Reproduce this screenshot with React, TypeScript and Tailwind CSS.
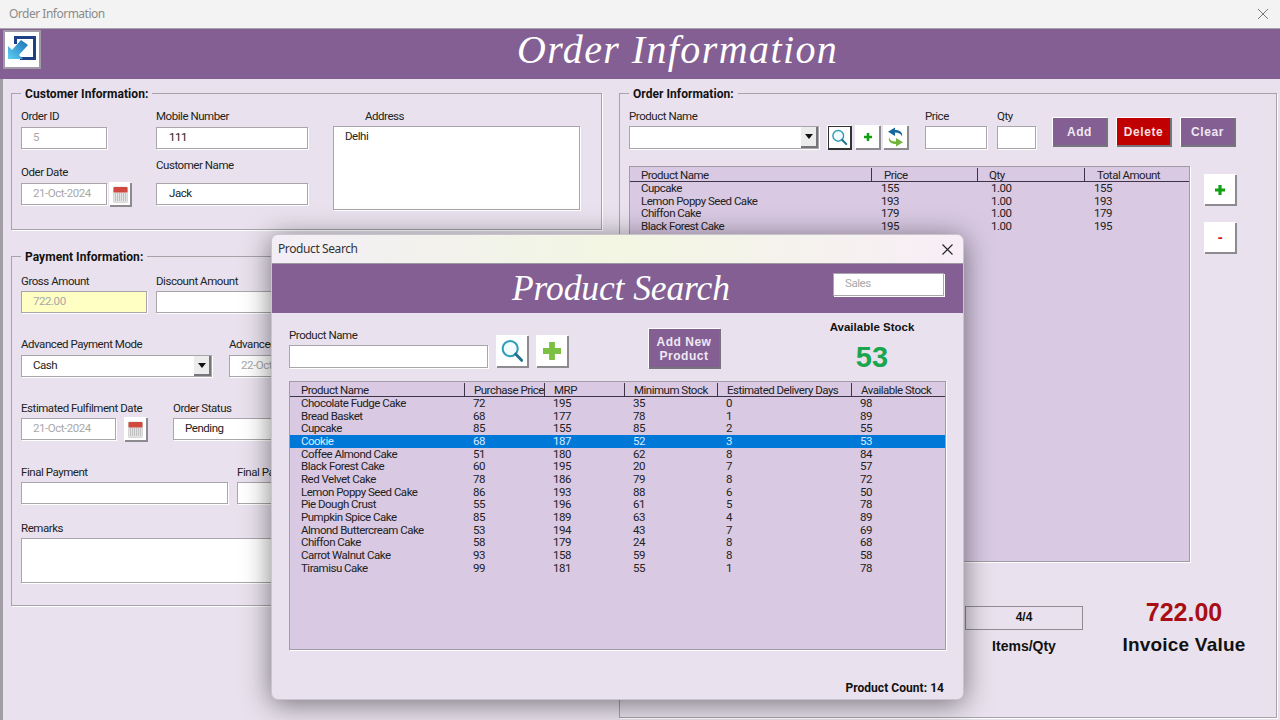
import React from "react";

const Label = ({ children, className = "" }: { children: React.ReactNode; className?: string }) => (
  <div className={`h-[14px] text-[11.5px] leading-[13px] text-[#222] whitespace-nowrap ${className}`}>{children}</div>
);

const Box = ({ children, className = "", muted = false }: { children?: React.ReactNode; className?: string; muted?: boolean }) => (
  <div className={`border border-[#a8a6aa] bg-white shadow-[1px_1px_0_#fff] text-[11.5px] leading-[19px] whitespace-nowrap overflow-hidden ${muted ? "text-[#a8a8a8]" : "text-[#222]"} ${className}`}>
    {children}
  </div>
);

const CalIcon = () => (
  <svg width="15" height="17" viewBox="0 0 15 17">
    <rect x="0.5" y="1" width="14" height="15.5" rx="1" fill="#e4e4e4" stroke="#bbb" strokeWidth="0.5" />
    <rect x="0.5" y="1" width="14" height="5.5" rx="1" fill="#d0483e" />
    {[8, 10, 12, 14].map((y) => (
      <line key={y} x1="2" x2="13" y1={y} y2={y} stroke="#9a9a9a" strokeWidth="1" strokeDasharray="1 1" />
    ))}
  </svg>
);

const Raised = ({ children, className = "" }: { children?: React.ReactNode; className?: string }) => (
  <div className={`flex items-center justify-center bg-white border-r-2 border-b-2 border-[#8d8a90] shadow-[-1px_-1px_0_#fff] shrink-0 ${className}`}>{children}</div>
);

const Cal = ({ className = "" }: { className?: string }) => (
  <Raised className={`bg-[#efefef] ${className}`}>
    <CalIcon />
  </Raised>
);

const Arrow = () => (
  <div className="w-[17px] h-full flex items-center justify-center bg-[#ececec] border-r-2 border-b-2 border-[#77747a]">
    <svg width="8" height="5" viewBox="0 0 8 5"><path d="M0 0h8L4 5z" fill="#111" /></svg>
  </div>
);

const Search = ({ size = 20 }: { size?: number }) => (
  <svg width={size} height={size} viewBox="0 0 20 20" fill="none">
    <circle cx="8.5" cy="8" r="6.3" stroke="#2f9db5" strokeWidth="1.7" fill="#f2fbfd" />
    <path d="M13 12.6l5 5.2" stroke="#25708f" strokeWidth="2.4" strokeLinecap="round" />
  </svg>
);

const Plus = ({ size, color }: { size: number; color: string }) => (
  <svg width={size} height={size} viewBox="0 0 10 10"><path d="M3.4 0h3.2v3.4H10v3.2H6.6V10H3.4V6.6H0V3.4h3.4z" fill={color} /></svg>
);

const Refresh = () => (
  <svg width="19" height="20" viewBox="0 0 19 20">
    <path d="M16 9.500C15 6.500 12.500 5.500 9 5.500L9 9L2 4.800L9 0.500L9 3C14 3 17 5.500 16 9.500Z" fill="#17699c" />
    <path d="M3 10.500C4 13.500 6.500 14.500 10 14.500L10 11L17 15.200L10 19.500L10 17C5 17 2 14.500 3 10.500Z" fill="#72b53a" />
  </svg>
);

const Legend = ({ children }: { children: React.ReactNode }) => (
  <legend className="ml-[9px] px-[4px] h-[14px] text-[12px] leading-[16px] font-bold text-[#111] tracking-[0.05px]">{children}</legend>
);

const fieldset = "border border-[#a6a3a9] shadow-[1px_1px_0_#fff] min-w-0";

type Col = { w: number; head: number; cell: number; title: string };

const Grid = ({ cols, rows, selected, className }: { cols: Col[]; rows: string[][]; selected?: number; className: string }) => (
  <div className={`border border-[#a09ca5] bg-[#d9c9e3] pt-[1px] text-[11.5px] tracking-[-0.5px] text-[#222] shadow-[1px_1px_0_#fff] overflow-hidden ${className}`}>
    <div className="flex h-[13px] border-b border-[#3d3547] leading-[14px] box-content">
      {cols.map((c, i) => (
        <div key={c.title} style={{ width: c.w, paddingLeft: c.head }} className={`whitespace-nowrap overflow-hidden ${i ? "border-l border-[#3d3547]" : ""}`}>
          {c.title}
        </div>
      ))}
    </div>
    {rows.map((r, ri) => (
      <div key={r[0]} className={`flex h-[12.67px] leading-[12px] ${ri === selected ? "bg-[#0078d7] text-[#d8ecff]" : ""}`}>
        {r.map((v, i) => (
          <div key={i} style={{ width: cols[i].w, paddingLeft: cols[i].cell }} className="whitespace-nowrap">{v}</div>
        ))}
      </div>
    ))}
  </div>
);

const orderCols: Col[] = [
  { w: 241, head: 11, cell: 11, title: "Product Name" },
  { w: 106, head: 12, cell: 10, title: "Price" },
  { w: 107, head: 11, cell: 14, title: "Qty" },
  { w: 105, head: 12, cell: 10, title: "Total Amount" },
];
const orderRows = [
  ["Cupcake", "155", "1.00", "155"],
  ["Lemon Poppy Seed Cake", "193", "1.00", "193"],
  ["Chiffon Cake", "179", "1.00", "179"],
  ["Black Forest Cake", "195", "1.00", "195"],
];

const productCols: Col[] = [
  { w: 174, head: 11, cell: 11, title: "Product Name" },
  { w: 80, head: 9, cell: 9, title: "Purchase Price" },
  { w: 80, head: 9, cell: 9, title: "MRP" },
  { w: 93, head: 9, cell: 9, title: "Minimum Stock" },
  { w: 134, head: 9, cell: 9, title: "Estimated Delivery Days" },
  { w: 94, head: 9, cell: 9, title: "Available Stock" },
];
const productRows = [
  ["Chocolate Fudge Cake", "72", "195", "35", "0", "98"],
  ["Bread Basket", "68", "177", "78", "1", "89"],
  ["Cupcake", "85", "155", "85", "2", "55"],
  ["Cookie", "68", "187", "52", "3", "53"],
  ["Coffee Almond Cake", "51", "180", "62", "8", "84"],
  ["Black Forest Cake", "60", "195", "20", "7", "57"],
  ["Red Velvet Cake", "78", "186", "79", "8", "72"],
  ["Lemon Poppy Seed Cake", "86", "193", "88", "6", "50"],
  ["Pie Dough Crust", "55", "196", "61", "5", "78"],
  ["Pumpkin Spice Cake", "85", "189", "63", "4", "89"],
  ["Almond Buttercream Cake", "53", "194", "43", "7", "69"],
  ["Chiffon Cake", "58", "179", "24", "8", "68"],
  ["Carrot Walnut Cake", "93", "158", "59", "8", "58"],
  ["Tiramisu Cake", "99", "181", "55", "1", "78"],
];

const ActionBtn = ({ label, red = false }: { label: string; red?: boolean }) => (
  <div className={`w-[55px] h-[29px] pt-[1px] flex items-center justify-center text-[12px] font-bold [font-family:'Liberation_Sans',sans-serif] tracking-[0.6px] border-r-2 border-b-2 border-[#77737c] shadow-[-1px_-1px_0_#fff] ${red ? "bg-[#c00000] text-[#f6dede]" : "bg-[#835f93] text-[#efe8f3]"}`}>
    {label}
  </div>
);

export default function App() {
  return (
    <div className="relative w-[1280px] h-[720px] overflow-hidden bg-[#e9e2ee] [font-family:Roboto,sans-serif] tracking-[-0.45px]">
      {/* window title bar */}
      <div className="h-[29px] flex items-center justify-between pl-[9px] pr-[10px] bg-[#f3f3f3] border-b border-[#a9a5ac] text-[12px] tracking-[-0.5px] text-[#8b8b8b] [font-family:'Noto_Sans',sans-serif]">
        <span>Order Information</span>
        <svg width="12" height="12" viewBox="0 0 12 12" className="mr-[1px]"><path d="M1 1l10 10M11 1L1 11" stroke="#777" strokeWidth="1" /></svg>
      </div>

      {/* page header */}
      <div className="h-[50px] flex bg-[#835f93] pl-[3px] pt-[1px]">
        <div className="w-[38px] h-[39px] bg-[#a39aa8] p-[2px] shrink-0">
          <div className="w-full h-full bg-white flex items-center justify-center">
            <svg width="32" height="32" viewBox="0 0 32 32">
              <defs>
                <linearGradient id="backArrow" x1="1" y1="0" x2="0" y2="1">
                  <stop offset="0" stopColor="#1a6fb5" />
                  <stop offset="1" stopColor="#5fd0f5" />
                </linearGradient>
              </defs>
              <path d="M8 2h22v24H14v-3h13V5H11v5H8z" fill="#1f3f86" />
              <path d="M22 11l-9 10 4 4H2V12l4 4 9-10z" fill="url(#backArrow)" />
            </svg>
          </div>
        </div>
        <div className="pl-[476px] text-[40px] leading-[40px] italic text-white tracking-[1.4px] [font-family:'Liberation_Serif',serif] whitespace-nowrap">
          Order Information
        </div>
      </div>

      {/* page body */}
      <div className="flex pt-[7px] pl-[8px] border-l-[3px] border-[#a29ea5] h-[641px]">
        <div className="w-[591px] shrink-0">
          <fieldset className={`${fieldset} h-[144px]`}>
            <Legend>Customer Information:</Legend>
            <div className="flex pt-[10px] pl-[9px]">
              <div className="w-[135px]">
                <Label>Order ID</Label>
                <Box muted className="mt-[3px] w-[86px] h-[22px] pl-[11px]">5</Box>
                <Label className="mt-[17px]">Oder Date</Label>
                <div className="flex gap-[3px] mt-[3px]">
                  <Box muted className="w-[86px] h-[22px] pl-[11px]">21-Oct-2024</Box>
                  <Cal className="w-[22px] h-[24px]" />
                </div>
              </div>
              <div className="w-[177px]">
                <Label>Mobile Number</Label>
                <Box className="mt-[3px] w-[152px] h-[22px] pl-[12px]">111</Box>
                <Label className="mt-[10px]">Customer Name</Label>
                <Box className="mt-[10px] w-[152px] h-[22px] pl-[12px]">Jack</Box>
              </div>
              <div>
                <Label className="pl-[32px]">Address</Label>
                <Box className="mt-[2px] w-[247px] h-[84px] pl-[11px]">Delhi</Box>
              </div>
            </div>
          </fieldset>

          <fieldset className={`${fieldset} h-[357px] mt-[19px]`}>
            <Legend>Payment Information:</Legend>
            <div className="pt-[12px] pl-[9px]">
              <div className="flex">
                <div className="w-[135px]">
                  <Label>Gross Amount</Label>
                  <Box muted className="mt-[2px] w-[126px] h-[22px] pl-[11px] !bg-[#ffffc4]">722.00</Box>
                </div>
                <div>
                  <Label>Discount Amount</Label>
                  <Box className="mt-[2px] w-[150px] h-[22px]" />
                </div>
              </div>

              <div className="flex mt-[25px]">
                <div className="w-[208px]">
                  <Label>Advanced Payment Mode</Label>
                  <Box className="mt-[3px] w-[191px] h-[22px] pl-[11px] flex justify-between">
                    Cash
                    <Arrow />
                  </Box>
                </div>
                <div>
                  <Label>Advanced</Label>
                  <Box muted className="mt-[3px] w-[110px] h-[22px] pl-[11px]">22-Oct-2024</Box>
                </div>
              </div>

              <div className="flex mt-[25px]">
                <div className="w-[152px]">
                  <Label>Estimated Fulfilment Date</Label>
                  <div className="flex gap-[9px] mt-[2px]">
                    <Box muted className="w-[95px] h-[22px] pl-[11px]">21-Oct-2024</Box>
                    <Cal className="w-[23px] h-[24px]" />
                  </div>
                </div>
                <div>
                  <Label>Order Status</Label>
                  <Box className="mt-[2px] w-[150px] h-[22px] pl-[11px]">Pending</Box>
                </div>
              </div>

              <div className="flex mt-[24px]">
                <div className="w-[216px]">
                  <Label>Final Payment</Label>
                  <Box className="mt-[2px] w-[207px] h-[22px]" />
                </div>
                <div>
                  <Label>Final Pay</Label>
                  <Box className="mt-[2px] w-[110px] h-[22px]" />
                </div>
              </div>

              <Label className="mt-[18px]">Remarks</Label>
              <Box className="mt-[2px] w-[560px] h-[45px]" />
            </div>
          </fieldset>
        </div>

        <fieldset className={`${fieldset} ml-[17px] w-[658px] h-[632px] shrink-0`}>
          <Legend>Order Information:</Legend>
          <div className="pt-[10px] pl-[9px]">
            <div className="flex items-start">
              <div className="w-[199px]">
                <Label>Product Name</Label>
                <Box className="mt-[2px] w-[190px] h-[23px] flex justify-end">
                  <Arrow />
                </Box>
              </div>
              <div className="flex pt-[16px] w-[97px]">
                <Raised className="w-[24px] h-[24px] !border-[#333] border-l border-t">
                  <Search size={17} />
                </Raised>
                <Raised className="w-[25px] h-[24px] ml-[4px]">
                  <Plus size={8} color="#12a012" />
                </Raised>
                <Raised className="w-[25px] h-[24px] ml-[3px] bg-[#f0f0f0]">
                  <Refresh />
                </Raised>
              </div>
              <div className="w-[72px]">
                <Label>Price</Label>
                <Box className="mt-[2px] w-[62px] h-[23px]" />
              </div>
              <div className="w-[56px]">
                <Label>Qty</Label>
                <Box className="mt-[2px] w-[39px] h-[23px]" />
              </div>
              <div className="flex gap-[9px] pt-[8px]">
                <ActionBtn label="Add" />
                <ActionBtn label="Delete" red />
                <ActionBtn label="Clear" />
              </div>
            </div>

            <div className="flex mt-[16px]">
              <Grid cols={orderCols} rows={orderRows} className="w-[561px] h-[396px] shrink-0" />
              <div className="ml-[15px] mt-[9px] flex flex-col gap-[17px]">
                <Raised className="w-[32px] h-[31px]">
                  <Plus size={10} color="#12a012" />
                </Raised>
                <Raised className="w-[32px] h-[31px] font-bold text-[15px] text-[#d02020] [font-family:'Liberation_Sans',sans-serif]">-</Raised>
              </div>
            </div>

            <div className="flex mt-[36px] ml-[336px] text-[#111] [font-family:'Liberation_Sans',sans-serif] font-bold tracking-normal">
              <div className="w-[118px] shrink-0 pt-[8px] text-center">
                <div className="h-[24px] border border-[#8f8c93] text-[12px] leading-[20px]">4/4</div>
                <div className="mt-[8px] text-[14px] leading-[16px]">Items/Qty</div>
              </div>
              <div className="w-[202px] shrink-0 text-center">
                <div className="text-[25px] leading-[28px] text-[#a80f14]">722.00</div>
                <div className="mt-[7px] text-[19px] leading-[24px] tracking-[0.2px]">Invoice Value</div>
              </div>
            </div>
          </div>
        </fieldset>
      </div>

      {/* product search dialog */}
      <div className="absolute left-[271px] top-[234px] w-[693px] h-[466px] bg-[#e9e2ee] rounded-[7px] border border-[#c9c5cc] shadow-[0_4px_28px_rgba(0,0,0,0.5)] overflow-hidden flex flex-col">
        <div className="h-[29px] shrink-0 flex items-center justify-between pl-[6px] pr-[10px] bg-gradient-to-r from-[#f3eef6] via-[#f2f6e2] to-[#f8eef7] border-b border-[#9c97a0] text-[12px] tracking-[-0.4px] text-[#333] [font-family:'Noto_Sans',sans-serif]">
          <span>Product Search</span>
          <svg width="11" height="11" viewBox="0 0 11 11"><path d="M0.500 0.500l10 10M10.500 0.500l-10 10" stroke="#222" strokeWidth="1.1" /></svg>
        </div>
        <div className="h-[49px] shrink-0 flex items-center bg-[#835f93]">
          <div className="pl-[240px] pb-[2px] text-[35.500px] leading-[40px] italic text-white tracking-[-0.1px] [font-family:'Liberation_Serif',serif] whitespace-nowrap">
            Product Search
          </div>
          <Box muted className="ml-auto mr-[19px] mb-[9px] w-[111px] h-[23px] pl-[11px]">Sales</Box>
        </div>

        <div className="h-[68px] shrink-0 flex pl-[17px]">
          <div className="w-[199px] pt-[16px]">
            <Label>Product Name</Label>
            <Box className="mt-[2px] w-[199px] h-[23px]" />
          </div>
          <div className="flex pt-[23px] pl-[9px] gap-[8px]">
            <Raised className="w-[32px] h-[32px]"><Search size={24} /></Raised>
            <Raised className="w-[32px] h-[32px]"><Plus size={18} color="#7bc043" /></Raised>
          </div>
          <div className="pt-[16px] pl-[80px]">
            <div className="w-[72px] h-[40px] pt-[2px] flex items-center justify-center text-center bg-[#835f93] text-[12px] leading-[14px] font-bold text-[#efe8f3] tracking-[0.5px] [font-family:'Liberation_Sans',sans-serif] border-r-2 border-b-2 border-[#77737c] shadow-[-1px_-1px_0_#fff]">
              Add New Product
            </div>
          </div>
          <div className="ml-[96px] w-[110px] pt-[7px] text-center [font-family:'Liberation_Sans',sans-serif] font-bold tracking-normal">
            <div className="text-[11.5px] leading-[14px] text-[#111]">Available Stock</div>
            <div className="mt-[7px] text-[29px] leading-[32px] text-[#1aa64f]">53</div>
          </div>
        </div>

        <div className="pl-[17px]">
          <Grid cols={productCols} rows={productRows} selected={3} className="w-[657px] h-[269px]" />
        </div>
        <div className="mt-[31px] pr-[19px] text-right text-[12px] leading-[14px] font-bold text-[#111] tracking-[0.05px]">Product Count: 14</div>
      </div>
    </div>
  );
}
